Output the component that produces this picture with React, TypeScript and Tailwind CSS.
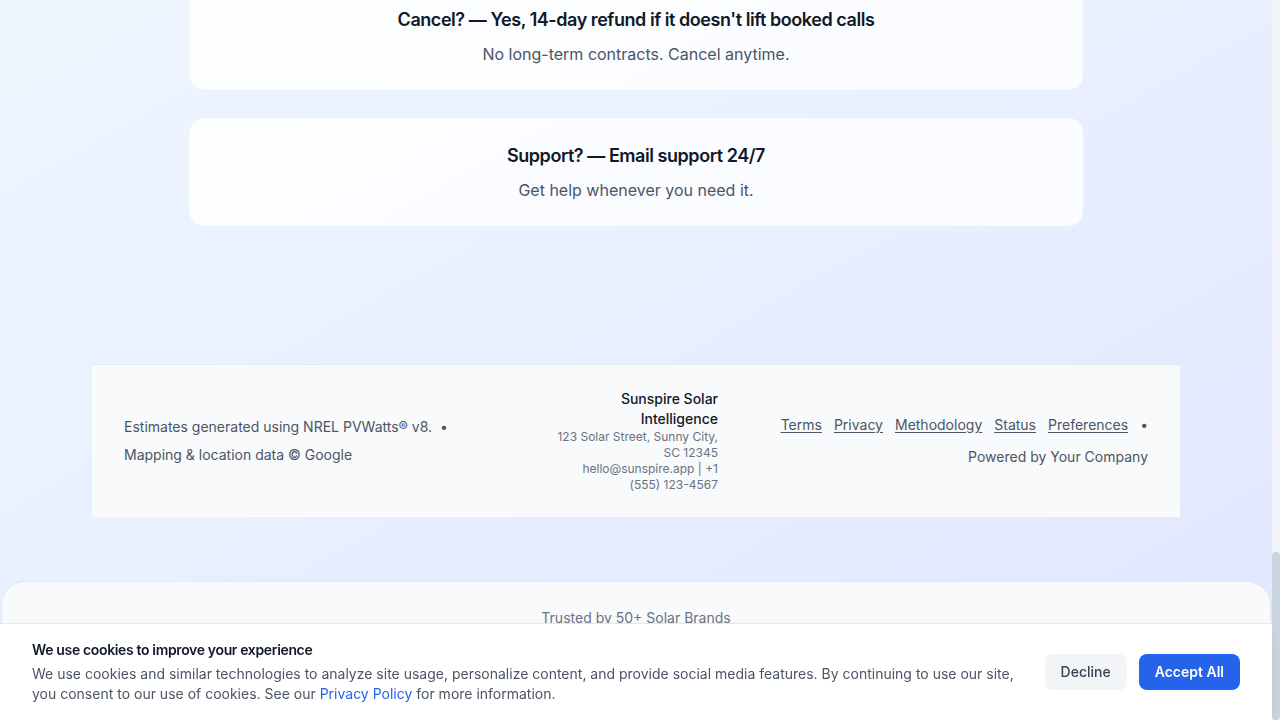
const faqs = [
  {
    q: "Cancel? — Yes, 14-day refund if it doesn't lift booked calls",
    a: "No long-term contracts. Cancel anytime.",
  },
  {
    q: "Support? — Email support 24/7",
    a: "Get help whenever you need it.",
  },
];

const links = ["Terms", "Privacy", "Methodology", "Status", "Preferences"];

const App = () => {
  return (
    <div className="flex h-[720px] w-full overflow-hidden font-['Inter','Noto_Sans',sans-serif]">
      {/* page */}
      <div className="flex-1 flex flex-col bg-gradient-to-br from-[#eff6ff] to-[#e0e7ff] overflow-hidden">
        {/* faq cards */}
        <div className="w-full max-w-4xl mx-auto flex flex-col gap-[26px] -mt-[19px]">
          {faqs.map((f) => (
            <div
              key={f.q}
              className="bg-white/80 border border-slate-200/60 rounded-2xl p-6 text-center"
            >
              <h3 className="text-lg font-semibold tracking-tight text-[#111827] mb-2">{f.q}</h3>
              <p className="text-base text-[#4b5563]">{f.a}</p>
            </div>
          ))}
        </div>

        {/* footer */}
        <footer className="w-[1088px] mx-auto mt-[137px] bg-[#f8fafc] border-t border-[#e2e8f0] px-8 py-6">
          <div className="flex items-center text-sm text-[#4b5563]">
            <div className="flex-1 flex flex-wrap items-center gap-2">
              <span>Estimates generated using NREL PVWatts® v8.</span>
              <span>•</span>
              <span>Mapping &amp; location data © Google</span>
            </div>
            <div className="w-[164px] ml-16 text-right">
              <p className="font-medium text-[#111827]">Sunspire Solar Intelligence</p>
              <p className="text-xs text-[#6b7280]">123 Solar Street, Sunny City, SC 12345</p>
              <p className="text-xs text-[#6b7280]">hello@sunspire.app | +1 (555) 123-4567</p>
            </div>
            <div className="w-[368px] ml-[62px] flex flex-wrap items-center justify-end gap-3">
              {links.map((l) => (
                <a key={l} href="#" className="underline underline-offset-2">
                  {l}
                </a>
              ))}
              <span>•</span>
              <span>Powered by Your Company</span>
            </div>
          </div>
        </footer>

        {/* trusted strip */}
        <div className="mt-16 mx-px bg-[#f8fafc] border border-[#e2e8f0] rounded-t-3xl pt-[26px] pb-16 text-center">
          <p className="text-sm text-[#6b7280]">Trusted by 50+ Solar Brands</p>
        </div>
      </div>

      {/* scrollbar */}
      <div className="w-2 flex flex-col justify-end bg-[#f1f5f9]">
        <div className="h-[168px] rounded-full bg-[#cbd5e1]"></div>
      </div>

      {/* cookie banner */}
      <div className="fixed bottom-0 left-0 right-2 bg-white border-t border-[#e5e7eb] shadow-lg px-8 py-4">
        <div className="flex items-center gap-6">
          <div className="flex-1">
            <h4 className="text-sm font-semibold tracking-tight text-[#111827] mb-1">
              We use cookies to improve your experience
            </h4>
            <p className="text-sm text-[#4b5563]">
              We use cookies and similar technologies to analyze site usage, personalize content, and
              provide social media features. By continuing to use our site, you consent to our use of
              cookies. See our{" "}
              <a href="#" className="text-[#2563eb]">
                Privacy Policy
              </a>{" "}
              for more information.
            </p>
          </div>
          <div className="flex gap-3">
            <button className="h-9 px-4 rounded-lg bg-[#f3f4f6] text-sm font-medium text-[#374151]">
              Decline
            </button>
            <button className="h-9 px-4 rounded-lg bg-[#2563eb] text-sm font-semibold text-white">
              Accept All
            </button>
          </div>
        </div>
      </div>
    </div>
  );
};

export default App;
